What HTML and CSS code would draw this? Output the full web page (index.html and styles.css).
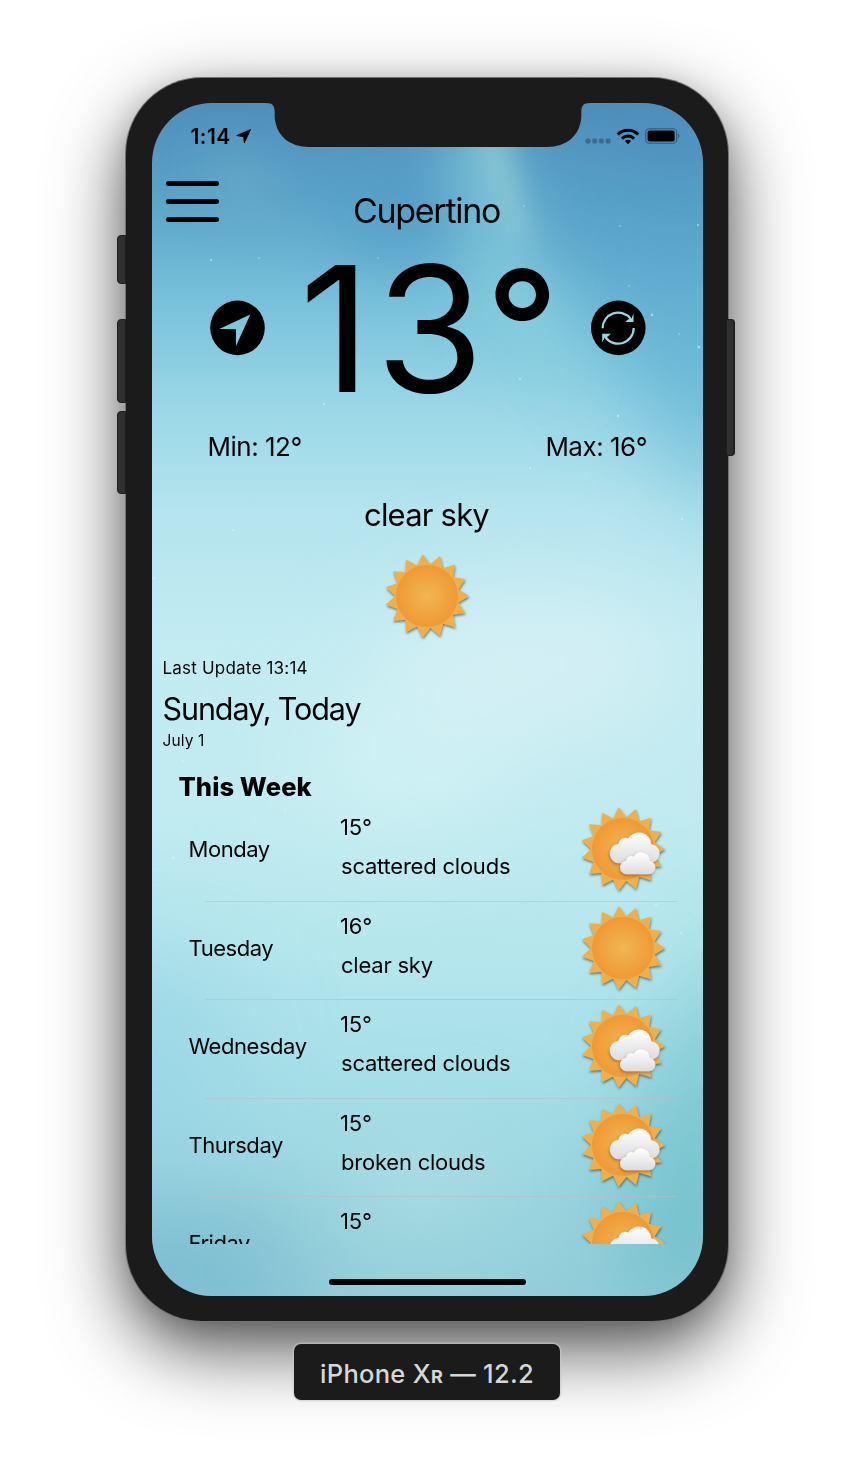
FILE: index.html
```html
<!DOCTYPE html>
<html lang="en">
<head>
<meta charset="utf-8">
<title>Weather</title>
<link rel="stylesheet" href="styles.css">
</head>
<body>
<svg class="defs" width="0" height="0" aria-hidden="true">
  <defs>
    <radialGradient id="disk"><stop offset="0" stop-color="#f1b653"/><stop offset=".75" stop-color="#f0a03c"/><stop offset="1" stop-color="#ef9936"/></radialGradient>
    <linearGradient id="cloudfill" x1="0" y1="0" x2="0" y2="1"><stop offset="0" stop-color="#fff"/><stop offset="1" stop-color="#dcdcde"/></linearGradient>
    <filter id="soft" x="-20%" y="-20%" width="140%" height="150%"><feDropShadow dx="0.5" dy="1.6" stdDeviation="1.3" flood-color="#2b3a34" flood-opacity=".65"/></filter>
    <filter id="cloudshadow" x="-20%" y="-20%" width="140%" height="150%"><feDropShadow dx="-.5" dy="1.5" stdDeviation="1.6" flood-color="#8a4a00" flood-opacity=".6"/></filter>
    <path id="ray" d="M42 0 30 7.500V-7.500Z"/>
    <symbol id="sun" viewBox="-48 -48 96 96">
      <g filter="url(#soft)">
        <g fill="#efb04b">
          <use href="#ray"/><use href="#ray" transform="rotate(24)"/><use href="#ray" transform="rotate(48)"/>
          <use href="#ray" transform="rotate(72)"/><use href="#ray" transform="rotate(96)"/><use href="#ray" transform="rotate(120)"/>
          <use href="#ray" transform="rotate(144)"/><use href="#ray" transform="rotate(168)"/><use href="#ray" transform="rotate(192)"/>
          <use href="#ray" transform="rotate(216)"/><use href="#ray" transform="rotate(240)"/><use href="#ray" transform="rotate(264)"/>
          <use href="#ray" transform="rotate(288)"/><use href="#ray" transform="rotate(312)"/><use href="#ray" transform="rotate(336)"/>
        </g>
        <circle r="31" fill="url(#disk)"/>
      </g>
    </symbol>
    <symbol id="cloudy" viewBox="-48 -48 96 96">
      <use href="#sun" x="-48" y="-48" width="96" height="96"/>
      <path filter="url(#cloudshadow)" fill="url(#cloudfill)" d="M-2.500 14.300A9.700 9.700 0 0 1-4.500-5.200 6.800 6.800 0 0 1 5.300-10.500 12.400 12.400 0 0 1 28.300-4.800 9.300 9.300 0 0 1 31 13Z"/>
      <path filter="url(#cloudshadow)" fill="url(#cloudfill)" d="M4.600 25.300A6.800 6.800 0 0 1 3.100 11.700 5 5 0 0 1 10.700 7.800 8.600 8.600 0 0 1 26.800 11.800 6.800 6.800 0 0 1 26 25.300Z"/>
    </symbol>
  </defs>
</svg>

<main class="stage">
  <section class="phone">
    <i class="key mute"></i><i class="key up"></i><i class="key down"></i><i class="key power"></i>
    <div class="screen">
      <svg class="sky" viewBox="0 0 551 1193" preserveAspectRatio="none">
        <defs>
          <linearGradient id="base" x1="0" y1="0" x2="0" y2="1">
            <stop offset="0" stop-color="#4f8fbc"/><stop offset=".08" stop-color="#5ba3c8"/><stop offset=".16" stop-color="#76bfda"/>
            <stop offset=".25" stop-color="#98d6e6"/><stop offset=".34" stop-color="#b4e4ee"/><stop offset=".45" stop-color="#c2ebf2"/>
            <stop offset=".58" stop-color="#c2ebf1"/><stop offset=".7" stop-color="#b6e7ed"/><stop offset=".82" stop-color="#a6dee8"/>
            <stop offset=".93" stop-color="#98d3de"/><stop offset="1" stop-color="#94cedb"/>
          </linearGradient>
          <filter id="b25" x="-100%" y="-100%" width="300%" height="300%"><feGaussianBlur stdDeviation="25"/></filter>
          <filter id="b50" x="-100%" y="-100%" width="300%" height="300%"><feGaussianBlur stdDeviation="48"/></filter>
          <filter id="b12" x="-100%" y="-100%" width="300%" height="300%"><feGaussianBlur stdDeviation="13"/></filter>
        </defs>
        <rect width="551" height="1193" fill="url(#base)"/>
        <g filter="url(#b50)">
          <path d="M400 100 600 60V380L520 330Z" fill="#4c98c4" opacity=".55"/>
          <path d="M430 200H600V460Z" fill="#62b6d6" opacity=".6"/>
          <ellipse cx="380" cy="560" rx="150" ry="80" fill="#d8f0f6" opacity=".75"/>
          <ellipse cx="250" cy="660" rx="110" ry="80" fill="#d6f3f5" opacity=".6"/>
          <path d="M600 800V1200H470L490 1000Z" fill="#53b0bc" opacity=".55"/>
          <ellipse cx="-10" cy="950" rx="100" ry="110" fill="#92cfe6" opacity=".5"/>
          <ellipse cx="10" cy="1170" rx="150" ry="70" fill="#62acc6" opacity=".5"/>
          <ellipse cx="270" cy="1080" rx="80" ry="50" fill="#b2e1e3" opacity=".7"/>
        </g>
        <g filter="url(#b25)">
          <path d="M160 100 370 60 430 170 300 150 220 170Z" fill="#4a97c5" opacity=".4"/>
          <ellipse cx="90" cy="80" rx="38" ry="14" fill="#79b5cd" opacity=".8" transform="rotate(40 90 80)"/>
          <path d="M290 20H350L430 300 330 230Z" fill="#8bd1dd" opacity=".65"/>
          <path d="M380 0H551V70Z" fill="#4b8abc" opacity=".6"/>
        </g>
        <path filter="url(#b12)" d="M322 25H350L378 150 350 120Z" fill="#93cbd4" opacity=".75"/>
        <g fill="#d9f7fb" opacity=".6">
          <circle cx="59" cy="157" r="1.100"/><circle cx="107" cy="155" r=".8"/><circle cx="226" cy="155" r=".8"/><circle cx="372" cy="103" r=".8"/>
          <circle cx="468" cy="123" r=".8"/><circle cx="546" cy="122" r="1"/><circle cx="477" cy="183" r=".8"/><circle cx="500" cy="212" r="1.200"/>
          <circle cx="527" cy="231" r=".8"/><circle cx="547" cy="244" r="1.200"/><circle cx="368" cy="276" r="1.100"/><circle cx="466" cy="313" r="1.200"/>
          <circle cx="172" cy="301" r="1.100"/><circle cx="378" cy="365" r="1.100"/><circle cx="530" cy="416" r="1.100"/><circle cx="81" cy="427" r="1.100"/>
          <circle cx="2" cy="475" r="1.100"/><circle cx="190" cy="595" r=".8"/><circle cx="31" cy="658" r="1.100"/><circle cx="133" cy="707" r="1.100"/>
          <circle cx="21" cy="755" r="1.200"/><circle cx="504" cy="802" r="1"/><circle cx="529" cy="830" r="1"/>
        </g>
      </svg>

      <svg class="notch" viewBox="0 0 324 44"><path d="M0 0C6.500 .2 8.500 2 8.700 9V14C10 33 24 44 43 44H281C300 44 314 33 315.300 14V9C315.500 2 317.500 .2 324 0Z" fill="#1b1b1b"/></svg>

      <header class="status">
        <div class="clock"><span>1:14</span>
          <svg width="15" height="15" viewBox="0 0 15 15"><path d="M14.600 .6 8.300 14 7.600 7.800 .6 6.500Z" stroke="#000" stroke-width=".8" stroke-linejoin="round"/></svg>
        </div>
        <div class="signals">
          <svg width="26" height="6" viewBox="0 0 26 6" fill="#000" opacity=".27"><rect x=".5" y=".5" width="5" height="5" rx="1.500"/><rect x="7.200" y=".5" width="5" height="5" rx="1.500"/><rect x="13.900" y=".5" width="5" height="5" rx="1.500"/><rect x="20.600" y=".5" width="5" height="5" rx="1.500"/></svg>
          <svg width="24" height="17" viewBox="0 0 24 17"><g fill="none" stroke="#000" stroke-width="3"><path d="M1.700 6.500A14.700 14.700 0 0 1 22.300 6.500"/><path d="M5.800 10.600A8.900 8.900 0 0 1 18.200 10.600"/></g><path d="M12 16.200 8.900 13A4.400 4.400 0 0 1 15.100 13Z"/></svg>
          <svg width="36" height="16" viewBox="0 0 36 16"><rect x=".7" y=".7" width="31" height="14.600" rx="3.700" fill="none" stroke="#000" stroke-opacity=".38" stroke-width="1.100"/><rect x="2.600" y="2.600" width="27" height="11" rx="2"/><path d="M33.200 5.300Q35.600 8 33.200 10.700Z" opacity=".4"/></svg>
        </div>
      </header>

      <div class="hero">
        <div class="menu"><i></i><i></i><i></i></div>
        <h1 class="city">Cupertino</h1>
      </div>

      <div class="now">
        <svg width="56" height="56" viewBox="0 0 56 56"><path fill-rule="evenodd" d="M28.500 .6A27.300 27.300 0 1 0 28.500 55.200 27.300 27.300 0 1 0 28.500 .6ZM41.300 14.600 27 46V29.300L10.300 28.900Z"/></svg>
        <div class="temp"><span class="one">1</span><span class="three">3</span><span class="deg">°</span></div>
        <svg width="56" height="56" viewBox="0 0 56 56"><circle cx="28.300" cy="27.900" r="27.300"/><g fill="none" stroke="#9bd5e5" stroke-width="2.200"><path d="M12.600 28.300A15.600 15.600 0 0 1 40.800 19"/><path d="M43.700 28A15.600 15.600 0 0 1 15.300 37"/></g><path fill="#9bd5e5" d="M43.500 13.500V21.900H35.300L38 19.600 41.400 18.400ZM12.200 42.400V33.800H20.900L17.800 36.500 14.600 37.800Z"/></svg>
      </div>

      <div class="range"><span>Min: 12°</span><span>Max: 16°</span></div>

      <div class="cond">clear sky</div>
      <svg class="sun" width="96" height="96"><use href="#sun"/></svg>

      <div class="dates">
        <div class="updated">Last Update 13:14</div>
        <div class="today">Sunday, Today</div>
        <div class="date">July 1</div>
      </div>

      <h2 class="week">This Week</h2>
      <ul class="list">
        <li class="row"><span class="day">Monday</span><div class="fc"><span>15°</span><span class="txt">scattered clouds</span></div><svg width="96" height="96"><use href="#cloudy"/></svg></li>
        <li class="row"><span class="day">Tuesday</span><div class="fc"><span>16°</span><span class="txt">clear sky</span></div><svg width="96" height="96"><use href="#sun"/></svg></li>
        <li class="row"><span class="day">Wednesday</span><div class="fc"><span>15°</span><span class="txt">scattered clouds</span></div><svg width="96" height="96"><use href="#cloudy"/></svg></li>
        <li class="row"><span class="day">Thursday</span><div class="fc"><span>15°</span><span class="txt">broken clouds</span></div><svg width="96" height="96"><use href="#cloudy"/></svg></li>
        <li class="row"><span class="day">Friday</span><div class="fc"><span>15°</span></div><svg width="96" height="96"><use href="#cloudy"/></svg></li>
      </ul>
      <div class="home"></div>
    </div>
  </section>
  <div class="caption">iPhone X<span class="sc">R</span> — 12.2</div>
</main>
</body>
</html>
```
FILE: styles.css
```css
* { box-sizing: border-box; }
body { margin: 0; background: #fff; font-family: Inter, "Liberation Sans", sans-serif; color: #050505; }
.defs { position: absolute; }
.stage { width: 854px; height: 1472px; padding-top: 78px; display: flex; flex-direction: column; align-items: center; overflow: hidden; }

.phone { position: relative; width: 602px; height: 1243px; padding: 25px 25px 25px 26px; border-radius: 76px; background: #1b1b1b; box-shadow: 0 0 0 1px #747474, 0 28px 74px rgba(0,0,0,.68), 0 8px 30px rgba(0,0,0,.14); }
.key { position: absolute; left: -9px; width: 9px; background: #303030; border: 1px solid #1f1f1f; border-radius: 4px 0 0 4px; }
.mute { top: 157px; height: 49px; }
.up { top: 241px; height: 84px; }
.down { top: 333px; height: 83px; }
.power { left: auto; right: -7px; top: 241px; height: 137px; border-radius: 0 4px 4px 0; border-right-width: 2px; }

.screen { position: relative; isolation: isolate; width: 551px; height: 1193px; border-radius: 60px; overflow: hidden; display: flex; flex-direction: column; }
.sky { position: absolute; inset: 0; width: 551px; height: 1193px; z-index: -1; }
.notch { position: absolute; left: 113.500px; top: 0; width: 324px; height: 44px; }

.status { height: 66px; padding: 0 22px 0 38.500px; display: flex; justify-content: space-between; align-items: center; }
.clock { display: flex; align-items: center; gap: 5px; font-size: 21px; font-weight: 600; letter-spacing: .4px; color: #000; }
.signals { display: flex; align-items: center; gap: 5px; }
.signals > svg:first-child { margin-top: 10px; }

.hero { height: 85px; position: relative; display: flex; justify-content: center; }
.menu { position: absolute; left: 14px; top: 12px; display: grid; gap: 13px; }
.menu i { display: block; width: 53px; height: 5px; border-radius: 3px; background: #000; }
.city { margin: 21px 2px 0 0; font-size: 34px; line-height: 42px; font-weight: 400; letter-spacing: -1.300px; }

.now { height: 148px; padding: 0 57px; display: flex; justify-content: space-between; align-items: center; }
.temp { display: flex; width: 246px; font-size: 175px; line-height: 148px; color: #000; }
.temp span { display: block; flex: none; }
.one { margin: 0 5px 0 -5px; }
.three { margin-right: 2px; }
.deg { font-size: 160px; font-weight: 500; margin-top: -1px; }

.range { height: 82px; padding: 26px 56px 0 55.500px; display: flex; justify-content: space-between; font-size: 26px; line-height: 38px; letter-spacing: -.5px; }
.cond { margin: 9px 2px 0 0; text-align: center; font-size: 31px; line-height: 44px; letter-spacing: -.8px; }
.sun { margin: 11px 0 0 227px; flex: none; }
.dates { padding-left: 10.500px; }
.updated { margin-top: 13px; font-size: 17px; line-height: 22px; letter-spacing: .2px; }
.today { margin-top: 10px; font-size: 30.500px; line-height: 40px; letter-spacing: -1.100px; }
.date { margin-top: 2px; font-size: 15.500px; line-height: 20px; letter-spacing: .1px; }

.week { margin: 20px 0 0 26.500px; font-size: 25.500px; line-height: 32px; font-weight: 800; letter-spacing: .1px; color: #000; }
.list { list-style: none; margin: 0; padding: 0; height: 441px; overflow: hidden; }
.row { position: relative; height: 98.500px; padding-left: 36.500px; display: grid; grid-template-columns: 151.500px 234.500px 96px; }
.row:not(:last-child)::after { content: ""; position: absolute; left: 53px; right: 26px; bottom: 0; height: 1px; background: rgba(190,185,195,.55); }
.day { font-size: 22px; line-height: 28px; margin-top: 32px; letter-spacing: -.45px; }
.fc { display: flex; flex-direction: column; font-size: 22px; line-height: 28px; padding-top: 10px; gap: 11px; letter-spacing: -.22px; }
.txt { margin-left: 1px; }
.row svg { margin-top: -2px; }
.home { width: 197px; height: 6px; border-radius: 3px; background: #000; margin: 35px auto 0; flex: none; }

.caption { position: relative; margin-top: 23px; width: 266px; height: 56px; border-radius: 7px; background: #1b1b1b; color: #d6d6d6; text-align: center; font-size: 25.500px; font-weight: 500; line-height: 60px; letter-spacing: .3px; box-shadow: 0 0 0 1.500px rgba(200,200,200,.55); white-space: nowrap; }
.sc { font-size: 18px; font-weight: 700; }
```
